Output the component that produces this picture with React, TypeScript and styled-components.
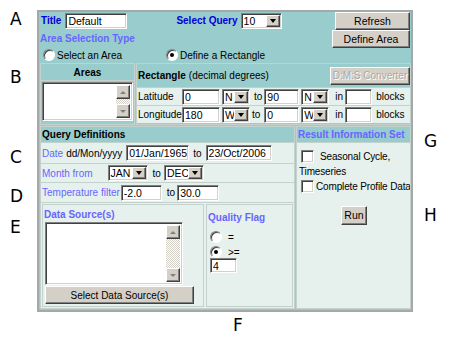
import React from "react";
import styled, { createGlobalStyle, css } from "styled-components";

const Global = createGlobalStyle`
  html, body { margin: 0; padding: 0; background: #fff; }
  body {
    font-family: "Liberation Sans", Arial, sans-serif;
    font-size: 10px;
    color: #000;
  }
  * { box-sizing: border-box; }
`;

const TEAL = "#99cccc";
const LIGHT = "#e6f0ec";
const LINE = "#c4d2ce";

const sunken = css`
  border: 1px solid;
  border-color: #808080 #ffffff #ffffff #808080;
  box-shadow: inset 1px 1px 0 #404040, inset -1px -1px 0 #d4d0c8;
`;

const raised = css`
  border: 1px solid;
  border-color: #ffffff #404040 #404040 #ffffff;
  box-shadow: inset -1px -1px 0 #808080;
  background: #d4d0c8;
`;

const Page = styled.div`
  width: 450px;
  height: 350px;
  display: grid;
  grid-template-columns: 37px 376px 1fr;
  grid-template-rows: 312px 1fr;
`;

const MarkerColumn = styled.div`
  display: flex;
  flex-direction: column;
`;

const Marker = styled.div<{ $top: number; $left?: number }>`
  font-family: "DejaVu Sans", sans-serif;
  font-size: 17px;
  line-height: 17px;
  height: 17px;
  margin-top: ${(p) => p.$top}px;
  margin-left: ${(p) => p.$left ?? 10}px;
`;

const BottomMarkers = styled.div`
  grid-column: 2;
  display: flex;
  justify-content: flex-start;
  padding-left: 196px;
`;

const Frame = styled.div`
  margin-top: 10px;
  width: 376px;
  height: 302px;
  background: ${TEAL};
  border: 2px solid #a4a8a8;
  display: flex;
  flex-direction: column;
  overflow: hidden;
`;

const TopRow = styled.div`
  display: flex;
  align-items: center;
  height: 18px;
  padding-left: 2px;
  padding-right: 1px;
  border-bottom: 1px solid #b2c2c2;
`;

const Text = styled.span<{ $tone?: "dark" | "light" | "black"; $bold?: boolean; $ml?: number }>`
  color: ${(p) =>
    p.$tone === "dark" ? "#0000dd" : p.$tone === "light" ? "#6666ff" : "#000"};
  font-weight: ${(p) => (p.$bold ? 700 : 400)};
  white-space: nowrap;
  margin-left: ${(p) => p.$ml ?? 0}px;
`;

const Field = styled.input<{ $w: number; $ml?: number; $h?: number }>`
  ${sunken};
  width: ${(p) => p.$w}px;
  height: ${(p) => p.$h ?? 16}px;
  margin: 0 0 0 ${(p) => p.$ml ?? 0}px;
  padding: 0 1px 0 2px;
  background: #fff;
  font: inherit;
  font-size: 10.5px;
  color: #000;
  outline: none;
  flex: none;
`;

const Button = styled.button<{ $w: number; $h?: number; $ml?: number; $disabled?: boolean; $fs?: number }>`
  ${raised};
  width: ${(p) => p.$w}px;
  height: ${(p) => p.$h ?? 18}px;
  margin: 0 0 0 ${(p) => p.$ml ?? 0}px;
  padding: 0;
  font: inherit;
  font-size: ${(p) => p.$fs ?? 10.5}px;
  white-space: nowrap;
  color: ${(p) => (p.$disabled ? "#a8a8a8" : "#000")};
  text-shadow: ${(p) => (p.$disabled ? "1px 1px 0 #fff" : "none")};
  cursor: default;
  flex: none;
`;

const SelectBox = styled.div<{ $w: number; $ml?: number }>`
  ${sunken};
  width: ${(p) => p.$w}px;
  height: 16px;
  margin-left: ${(p) => p.$ml ?? 0}px;
  background: #fff;
  display: flex;
  align-items: stretch;
  padding: 1px;
  font-size: 10.5px;
  flex: none;
`;

const SelectValue = styled.span`
  flex: 1;
  padding-left: 1px;
  display: flex;
  align-items: center;
  overflow: hidden;
`;

const ArrowBtn = styled.span`
  ${raised};
  width: 14px;
  display: flex;
  align-items: center;
  justify-content: center;
`;

const Tri = styled.span`
  width: 0;
  height: 0;
  border-left: 3.5px solid transparent;
  border-right: 3.5px solid transparent;
  border-top: 4px solid #000;
`;

const Select = ({ value, w, ml }: { value: string; w: number; ml?: number }) => (
  <SelectBox $w={w} $ml={ml}>
    <SelectValue>{value}</SelectValue>
    <ArrowBtn>
      <Tri />
    </ArrowBtn>
  </SelectBox>
);

const Spacer = styled.span`
  flex: 1;
`;

const AreaSection = styled.div`
  display: flex;
  height: 33px;
  padding-right: 1px;
`;

const AreaLeft = styled.div`
  flex: 1;
  display: flex;
  flex-direction: column;
  padding-left: 1px;
`;

const AreaHeading = styled.div`
  color: #6666ff;
  font-weight: 700;
  line-height: 14px;
  margin-top: 2px;
`;

const RadioRow = styled.div`
  display: flex;
  align-items: center;
  margin-top: 3px;
  padding-left: 3px;
`;

const RadioItem = styled.label<{ $w?: number }>`
  display: flex;
  align-items: center;
  gap: 2px;
  width: ${(p) => (p.$w ? `${p.$w}px` : "auto")};
`;

const RadioDot = styled.span<{ $on?: boolean }>`
  width: 12px;
  height: 12px;
  border-radius: 50%;
  border: 1px solid;
  border-color: #808080 #ffffff #ffffff #808080;
  box-shadow: inset 1px 1px 0 #404040;
  background: #fff;
  display: flex;
  align-items: center;
  justify-content: center;
  flex: none;
  &::after {
    content: "";
    width: 4px;
    height: 4px;
    border-radius: 50%;
    background: ${(p) => (p.$on ? "#000" : "transparent")};
  }
`;

const CheckBox = styled.span`
  width: 13px;
  height: 13px;
  ${sunken};
  background: #fff;
  flex: none;
  display: inline-block;
`;

const PanelRow = styled.div`
  display: flex;
  gap: 1px;
  height: 62px;
  padding: 0 0 0 1px;
`;

const Panel = styled.div<{ $w?: number; $bg?: string }>`
  ${(p) => (p.$w ? `width: ${p.$w}px; flex: none;` : "flex: 1;")}
  min-width: 0;
  overflow: hidden;
  border: 1px solid ${LINE};
  background: ${(p) => p.$bg ?? TEAL};
  display: flex;
  flex-direction: column;
`;

const AreasHeader = styled.div`
  height: 17px;
  text-align: center;
  font-weight: 700;
  line-height: 17px;
  border-bottom: 1px solid ${LINE};
`;

const ListBox = styled.div<{ $h: number; $w?: number }>`
  ${sunken};
  background: #fff;
  height: ${(p) => p.$h}px;
  ${(p) => (p.$w ? `width: ${p.$w}px;` : "")}
  display: flex;
  justify-content: flex-end;
  padding: 2px;
  margin: 1px;
`;

const ScrollTrack = styled.div`
  width: 14px;
  display: flex;
  flex-direction: column;
  justify-content: space-between;
  background-color: #eeece8;
  background-image: repeating-conic-gradient(#d4d0c8 0% 25%, #ffffff 0% 50%);
  background-size: 2px 2px;
`;

const ScrollBtn = styled.span`
  ${raised};
  height: 14px;
  display: flex;
  align-items: center;
  justify-content: center;
`;

const SmallTri = styled.span<{ $up?: boolean }>`
  width: 0;
  height: 0;
  border-left: 3px solid transparent;
  border-right: 3px solid transparent;
  ${(p) =>
    p.$up
      ? css`border-bottom: 3px solid #808080;`
      : css`border-top: 3px solid #808080;`}
`;

const Scrollbar = () => (
  <ScrollTrack>
    <ScrollBtn>
      <SmallTri $up />
    </ScrollBtn>
    <ScrollBtn>
      <SmallTri />
    </ScrollBtn>
  </ScrollTrack>
);

const RectHeader = styled.div`
  height: 23px;
  display: flex;
  align-items: center;
  padding: 0 0 0 1px;
`;

const CoordRow = styled.div`
  height: 18px;
  background: ${LIGHT};
  display: flex;
  align-items: center;
  padding-left: 1px;
  border-top: 1px solid ${LINE};
`;

const CoordLabel = styled.span`
  width: 44px;
  flex: none;
`;

const QueryRow = styled.div`
  display: flex;
  gap: 1px;
  flex: 1;
  padding: 1px 0 1px 1px;
`;

const QHeader = styled.div<{ $tone?: string }>`
  height: 16px;
  background: ${TEAL};
  font-weight: 700;
  line-height: 16px;
  padding-left: 1px;
  white-space: nowrap;
  color: ${(p) => p.$tone ?? "#000"};
  border-bottom: 1px solid ${LINE};
`;

const QLine = styled.div<{ $h: number }>`
  height: ${(p) => p.$h}px;
  background: ${LIGHT};
  display: flex;
  align-items: center;
  padding-left: 1px;
  border-bottom: 1px solid ${LINE};
`;

const SubRow = styled.div`
  flex: 1;
  display: flex;
  gap: 2px;
  padding: 1px;
  background: ${LIGHT};
`;

const SubPanel = styled.div<{ $w?: number }>`
  ${(p) => (p.$w ? `width: ${p.$w}px; flex: none;` : "flex: 1;")}
  border: 1px solid ${LINE};
  display: flex;
  flex-direction: column;
  padding: 1px;
`;

const SubHeading = styled.div<{ $mt?: number }>`
  color: #6666ff;
  font-weight: 700;
  line-height: 13px;
  margin-top: ${(p) => p.$mt ?? 2}px;
`;

const WideButton = styled(Button)`
  align-self: flex-start;
`;

const QualityList = styled.div`
  display: flex;
  flex-direction: column;
  gap: 3px;
  margin-top: 7px;
  padding-left: 2px;
`;

const ResultBody = styled.div`
  display: flex;
  flex-direction: column;
  padding: 6px 1px 0 2px;
  line-height: 15px;
  letter-spacing: -0.15px;
`;

const CheckLine = styled.div<{ $gap: number }>`
  display: flex;
  align-items: center;
  gap: ${(p) => p.$gap}px;
  padding-left: 2px;
  white-space: nowrap;
`;

const RunWrap = styled.div`
  display: flex;
  justify-content: center;
  margin-top: 12px;
  letter-spacing: 0;
`;

export default function App() {
  return (
    <>
      <Global />
      <Page>
        <MarkerColumn>
          <Marker $top={11}>A</Marker>
          <Marker $top={41}>B</Marker>
          <Marker $top={63}>C</Marker>
          <Marker $top={22}>D</Marker>
          <Marker $top={14}>E</Marker>
        </MarkerColumn>

        <Frame>
          <TopRow>
            <Text $tone="dark" $bold>Title</Text>
            <Field $w={62} $ml={4} defaultValue="Default" />
            <Text $tone="dark" $bold $ml={49}>Select Query</Text>
            <Select value="10" w={41} ml={3} />
            <Spacer />
            <Button $w={75}>Refresh</Button>
          </TopRow>

          <AreaSection>
            <AreaLeft>
              <AreaHeading>Area Selection Type</AreaHeading>
              <RadioRow>
                <RadioItem $w={123}>
                  <RadioDot />
                  <span>Select an Area</span>
                </RadioItem>
                <RadioItem>
                  <RadioDot $on />
                  <span>Define a Rectangle</span>
                </RadioItem>
              </RadioRow>
            </AreaLeft>
            <Button $w={78}>Define Area</Button>
          </AreaSection>

          <PanelRow>
            <Panel $w={95}>
              <AreasHeader>Areas</AreasHeader>
              <ListBox $h={39}>
                <Scrollbar />
              </ListBox>
            </Panel>
            <Panel>
              <RectHeader>
                <Text $bold>Rectangle</Text>
                <Text $ml={3}>(decimal degrees)</Text>
                <Spacer />
                <Button $w={80} $fs={10} $disabled>D:M:S Converter</Button>
              </RectHeader>
              <CoordRow>
                <CoordLabel>Latitude</CoordLabel>
                <Field $w={38} defaultValue="0" />
                <Select value="N" w={28} ml={2} />
                <Text $ml={4}>to</Text>
                <Field $w={35} $ml={2} defaultValue="90" />
                <Select value="N" w={28} ml={2} />
                <Text $ml={6}>in</Text>
                <Field $w={27} $ml={2} />
                <Text $ml={4}>blocks</Text>
              </CoordRow>
              <CoordRow>
                <CoordLabel>Longitude</CoordLabel>
                <Field $w={38} defaultValue="180" />
                <Select value="W" w={28} ml={2} />
                <Text $ml={2}>to</Text>
                <Field $w={35} $ml={4} defaultValue="0" />
                <Select value="W" w={28} ml={2} />
                <Text $ml={6}>in</Text>
                <Field $w={27} $ml={2} />
                <Text $ml={4}>blocks</Text>
              </CoordRow>
            </Panel>
          </PanelRow>

          <QueryRow>
            <Panel $w={255} $bg={LIGHT}>
              <QHeader>Query Definitions</QHeader>
              <QLine $h={21}>
                <Text $tone="light">Date</Text>
                <Text $ml={3}>dd/Mon/yyyy</Text>
                <Field $w={63} $ml={4} defaultValue="01/Jan/1965" />
                <Text $ml={4}>to</Text>
                <Field $w={66} $ml={4} defaultValue="23/Oct/2006" />
              </QLine>
              <QLine $h={19}>
                <Text $tone="light">Month from</Text>
                <Select value="JAN" w={40} ml={15} />
                <Text $ml={5}>to</Text>
                <Select value="DEC" w={40} ml={3} />
              </QLine>
              <QLine $h={20}>
                <Text $tone="light">Temperature filter</Text>
                <Field $w={41} $ml={1} defaultValue="-2.0" />
                <Text $ml={5}>to</Text>
                <Field $w={42} $ml={2} defaultValue="30.0" />
              </QLine>
              <SubRow>
                <SubPanel $w={162}>
                  <SubHeading>Data Source(s)</SubHeading>
                  <ListBox $h={63} $w={138}>
                    <Scrollbar />
                  </ListBox>
                  <WideButton $w={149} $ml={1} $fs={10}>Select Data Source(s)</WideButton>
                </SubPanel>
                <SubPanel>
                  <SubHeading $mt={5}>Quality Flag</SubHeading>
                  <QualityList>
                    <RadioItem>
                      <RadioDot />
                      <Text $ml={4}>=</Text>
                    </RadioItem>
                    <RadioItem>
                      <RadioDot $on />
                      <Text $ml={4}>&gt;=</Text>
                    </RadioItem>
                  </QualityList>
                  <Field $w={27} $h={15} $ml={2} defaultValue="4" />
                </SubPanel>
              </SubRow>
            </Panel>
            <Panel $bg={LIGHT}>
              <QHeader $tone="#6666ff">Result Information Set</QHeader>
              <ResultBody>
                <CheckLine $gap={6}>
                  <CheckBox />
                  <span>Seasonal Cycle,</span>
                </CheckLine>
                <span>Timeseries</span>
                <CheckLine $gap={2}>
                  <CheckBox />
                  <span>Complete Profile Data</span>
                </CheckLine>
                <RunWrap>
                  <Button $w={26} $h={19}>Run</Button>
                </RunWrap>
              </ResultBody>
            </Panel>
          </QueryRow>
        </Frame>

        <MarkerColumn>
          <Marker $top={133} $left={11}>G</Marker>
          <Marker $top={57} $left={11}>H</Marker>
        </MarkerColumn>

        <BottomMarkers>
          <Marker $top={5} $left={0}>F</Marker>
        </BottomMarkers>
      </Page>
    </>
  );
}
